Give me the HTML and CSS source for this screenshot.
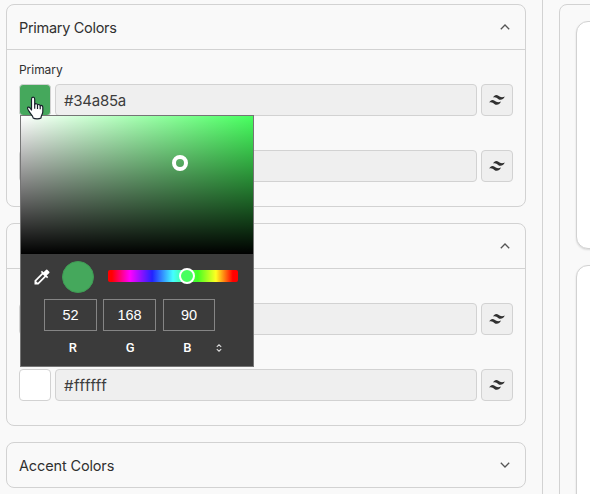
FILE: index.html
```html
<!DOCTYPE html>
<html lang="en">
<head>
<meta charset="utf-8">
<title>Theme colors</title>
<link rel="stylesheet" href="styles.css">
</head>
<body>
<svg class="defs" width="0" height="0" aria-hidden="true">
  <symbol id="swap" viewBox="0 0 16 12">
    <path d="M4 3.500C5.200.8 7.700.2 9.400 1.800c1.700 1.500 3.900 1.900 6.400.7C14.300 5.700 11.400 6.800 9.100 4.900 7.500 3.500 6.200 2.700 4 3.500Z"/>
    <path d="M.2 8.500C1.400 5.800 3.900 5.200 5.600 6.800c1.700 1.500 3.900 1.900 6.400.7C10.500 10.700 7.600 11.800 5.300 9.900 3.700 8.500 2.400 7.700.2 8.500Z"/>
  </symbol>
  <symbol id="chevron" viewBox="0 0 10 6">
    <path d="M.8 5.200 5 1l4.200 4.200" fill="none" stroke="#555" stroke-width="1.300"/>
  </symbol>
</svg>
<div class="app">
  <main class="settings">
    <section class="card">
      <header class="card-head open"><h2>Primary Colors</h2><svg class="chev"><use href="#chevron"/></svg></header>
      <div class="card-body">
        <div class="field">
          <label>Primary</label>
          <div class="row">
            <span class="swatch green"></span><div class="input">#34a85a</div><button><svg><use href="#swap"/></svg></button>
            <div class="picker">
              <div class="shade"><span class="shade-handle"></span></div>
              <div class="tools">
                <svg class="dropper" viewBox="0 0 24 24"><path d="M20.710 5.630l-2.340-2.340a1 1 0 0 0-1.410 0l-3.120 3.120-1.930-1.910-1.410 1.410 1.420 1.420L3 16.250V21h4.750l8.920-8.920 1.420 1.420 1.410-1.410-1.920-1.920 3.120-3.120a1 1 0 0 0 .010-1.420zM6.920 19L5 17.080l8.060-8.060 1.920 1.920L6.920 19z"/></svg>
                <span class="preview"></span>
                <div class="hue"><span class="hue-handle"></span></div>
              </div>
              <div class="values"><span>52</span><span>168</span><span>90</span></div>
              <div class="channels"><span>R</span><span>G</span><span>B</span>
                <svg viewBox="0 0 6 8"><path d="M.8 2.800 3 .8l2.200 2M.8 5.200 3 7.200l2.200-2"/></svg>
              </div>
            </div>
            <svg class="cursor" viewBox="0 0 18 24"><path d="M5.500 14V3.200c0-2.700 3.200-2.700 3.200 0v5.200c.5-1.100 2.700-.8 2.800.6.700-.9 2.600-.5 2.700.8.900-.8 2.600-.2 2.600 1.400v4.600c0 2.500-1.800 3.600-1.800 6.200-1.600 1.200-6.300 1.200-7.800 0 0-2.300-2.900-4-4.300-6.900-.7-1.400-1.700-2.200-1.300-3.300.6-1.500 2.300-.5 3.900 2.200Z"/><path d="M8.700 8.300v4.500M11.500 9v4M14.200 9.800v3.400"/></svg>
          </div>
        </div>
        <div class="field">
          <label></label>
          <div class="row"><span class="swatch"></span><div class="input"></div><button><svg><use href="#swap"/></svg></button></div>
        </div>
      </div>
    </section>
    <section class="card">
      <header class="card-head open"><h2></h2><svg class="chev"><use href="#chevron"/></svg></header>
      <div class="card-body">
        <div class="field">
          <label></label>
          <div class="row"><span class="swatch"></span><div class="input"></div><button><svg><use href="#swap"/></svg></button></div>
        </div>
        <div class="field">
          <label></label>
          <div class="row"><span class="swatch white"></span><div class="input hex-white">#ffffff</div><button><svg><use href="#swap"/></svg></button></div>
        </div>
      </div>
    </section>
    <section class="card">
      <header class="card-head"><h2 class="accent">Accent Colors</h2><svg class="chev down"><use href="#chevron"/></svg></header>
    </section>
  </main>
  <aside class="preview-pane">
    <div class="canvas">
      <div class="tile"></div>
      <div class="tile tall"></div>
    </div>
  </aside>
</div>
</body>
</html>
```
FILE: styles.css
```css
* { box-sizing: border-box; }
body {
  margin: 0;
  overflow: hidden;
  background: #f9f9f9;
  color: #303030;
  font-family: "Inter", "Noto Sans", sans-serif;
}
.defs { position: absolute; }
.app { display: flex; width: 590px; height: 494px; overflow: hidden; }
.settings {
  flex: none;
  width: 543px;
  padding: 4px 16px 0 6px;
  border-right: 1px solid #d2d2d2;
  display: flex;
  flex-direction: column;
  gap: 16px;
}
.card { border: 1px solid #d2d2d2; border-radius: 8px; }
.card-head {
  height: 44px;
  padding: 0 15px 0 12px;
  display: flex;
  align-items: center;
  justify-content: space-between;
}
.card-head.open { height: 45px; border-bottom: 1px solid #d2d2d2; }
h2 {
  margin: 0;
  padding-top: 2px;
  font: 400 14.500px/20px "Inter", sans-serif;
  letter-spacing: -0.300px;
}
h2.accent { letter-spacing: -0.140px; }
.chev { width: 10px; height: 6px; }
.down { transform: rotate(180deg); }
.card-body {
  padding: 12px 12px 24px;
  display: flex;
  flex-direction: column;
  gap: 12px;
}
.field { display: flex; flex-direction: column; gap: 6px; }
label { height: 16px; font: 400 12px/16px "Inter", sans-serif; letter-spacing: -0.050px; }
.row { position: relative; display: flex; gap: 4px; height: 32px; }
.swatch, .input, button {
  border: 1px solid #d2d2d2;
  border-radius: 4px;
  background: #efefef;
}
.swatch { width: 32px; }
.swatch.green { background: #45a85c; }
.swatch.white { background: #fff; }
.input {
  flex: 1;
  padding-left: 8px;
  color: #3c3c3c;
  font: 400 15px/31px "Inter", sans-serif;
  letter-spacing: -0.250px;
}
.input.hex-white { letter-spacing: 0.500px; }
button { width: 32px; padding: 0; display: grid; place-items: center; }
button svg { width: 16px; height: 12px; fill: #303030; }

.picker {
  position: absolute;
  z-index: 2;
  left: 1px;
  top: 31px;
  width: 234px;
  height: 252px;
  border: 1px solid #757575;
  background: #3b3b3b;
  color: #fff;
  font: 14.500px "Liberation Sans", sans-serif;
}
.shade {
  position: relative;
  height: 138px;
  background: linear-gradient(to top, #000, transparent), linear-gradient(to right, #fff, #47ff5f);
}
.shade-handle {
  position: absolute;
  left: 151px;
  top: 39px;
  width: 16px;
  height: 16px;
  border: 4px solid #fff;
  border-radius: 50%;
}
.tools { display: flex; align-items: center; height: 45px; padding: 0 15px 0 11px; }
.dropper { width: 20px; height: 20px; fill: #fff; }
.preview {
  width: 32px;
  height: 32px;
  margin: 1px 14px 0 10px;
  border: 1px solid #3f9b54;
  border-radius: 50%;
  background: #45a85c;
}
.hue {
  position: relative;
  flex: 1;
  height: 12px;
  margin-bottom: 1px;
  border-radius: 2px;
  background: linear-gradient(to right, #f00 3%, #f0f 17%, #22f 34%, #4ff 50%, #4f4 64%, #4f2 69%, #ff2 83%, #f00 96%);
}
.hue-handle {
  position: absolute;
  left: 71px;
  top: -2px;
  width: 16px;
  height: 16px;
  border: 2px solid #fff;
  border-radius: 50%;
  background: #47ff5f;
}
.values {
  display: flex;
  padding-left: 23px;
}
.values span {
  width: 53px;
  height: 32px;
  margin-right: 6px;
  border: 1px solid #858585;
  text-align: center;
  line-height: 30px;
}
.values span:nth-child(2) { margin-right: 7px; }
.values span:last-child { width: 52px; }
.channels {
  display: grid;
  grid-template-columns: 57.500px 57.500px 56.500px 6px;
  padding-left: 23px;
  align-items: center;
  height: 33px;
  font: 500 13px "Roboto", sans-serif;
}
.channels span { text-align: center; }
.channels svg {
  width: 6px;
  height: 8px;
  fill: none;
  stroke: #ddd;
  stroke-width: 1.100;
}
.cursor {
  position: absolute;
  z-index: 3;
  left: 7px;
  top: 12px;
  width: 18px;
  height: 24px;
  fill: #fff;
  stroke: #18202b;
  stroke-width: 1.200;
  stroke-linejoin: round;
}

.preview-pane { flex: none; width: 100px; padding: 4px 0 0 16px; }
.canvas {
  height: 520px;
  padding: 16px;
  border: 1px solid #d2d2d2;
  border-radius: 8px;
  display: flex;
  flex-direction: column;
  gap: 16px;
}
.tile {
  flex: none;
  width: 120px;
  height: 228px;
  border: 1px solid #d2d2d2;
  border-radius: 12px;
  background: #fff;
  box-shadow: 0 1px 2px #0002;
}
.tile.tall { height: 300px; }
```
